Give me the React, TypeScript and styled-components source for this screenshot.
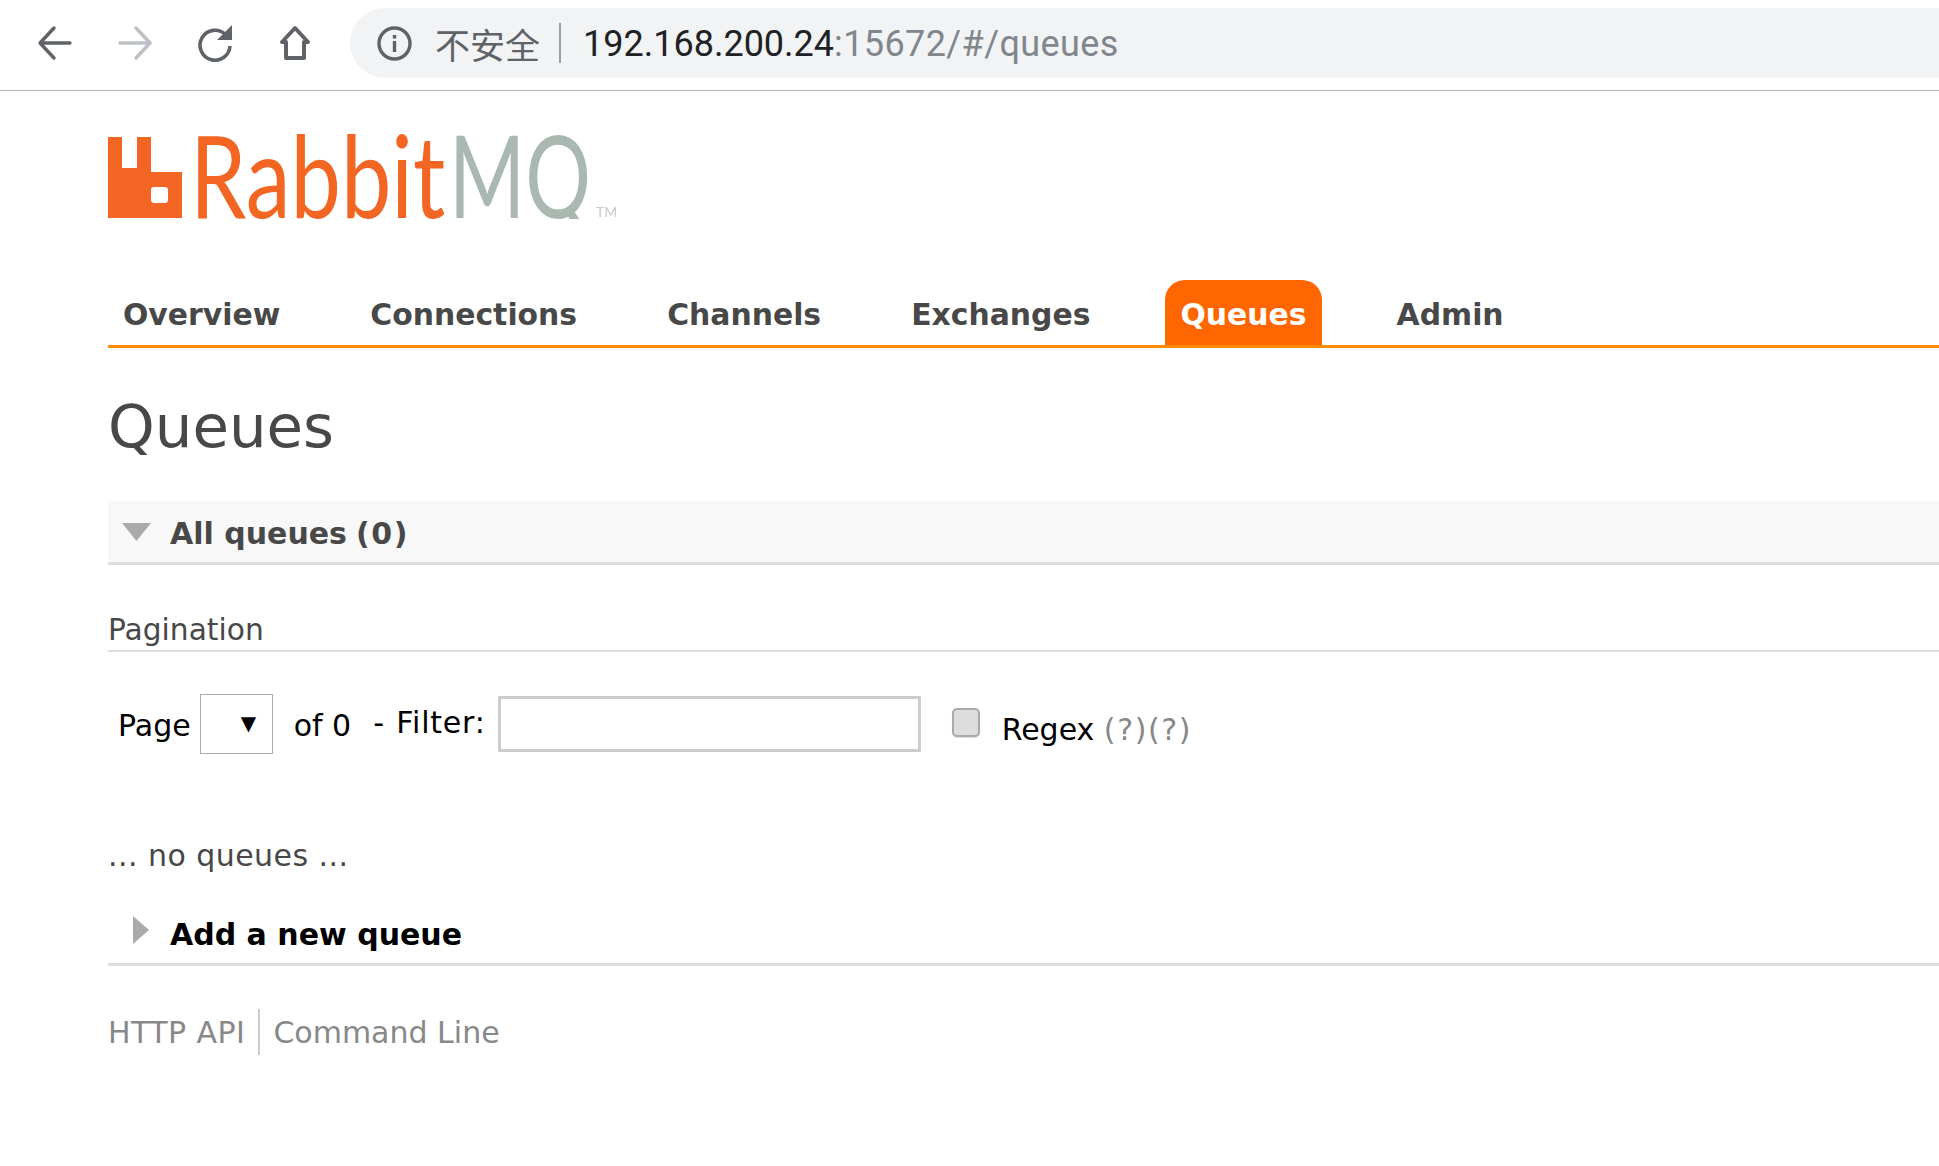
import React from 'react';
import styled, { createGlobalStyle } from 'styled-components';

const GlobalStyle = createGlobalStyle`
  html, body {
    margin: 0;
    padding: 0;
    background: #fff;
    overflow-x: hidden;
  }
  body {
    font-family: "DejaVu Sans", Verdana, sans-serif;
    color: #484848;
  }
`;

const Toolbar = styled.div`
  height: 90px;
  border-bottom: 1px solid #b4b4b4;
  display: flex;
  align-items: flex-start;
  padding-left: 15px;
`;

const NavButton = styled.div`
  width: 80px;
  height: 86px;
  display: flex;
  align-items: center;
  justify-content: center;
  flex: none;
`;

const Omnibox = styled.div`
  flex: 1;
  margin: 8px 0 0 15px;
  height: 70px;
  background: #f1f3f4;
  border-radius: 35px 0 0 35px;
  display: flex;
  align-items: center;
  padding-left: 27px;
`;

const Insecure = styled.span`
  margin-left: 23px;
  font-family: "Noto Sans CJK SC", sans-serif;
  font-size: 35px;
  color: #5f6368;
`;

const OmniDivider = styled.div`
  width: 2px;
  height: 40px;
  margin: 0 22px 0 19px;
  background: #9aa0a6;
`;

const Url = styled.span`
  font-family: Roboto, sans-serif;
  font-size: 36px;
  padding-top: 2px;
  color: #80868b;
  white-space: nowrap;
  letter-spacing: 0.4px;
`;

const UrlHost = styled.span`
  color: #202124;
  letter-spacing: 0;
`;

const Page = styled.div`
  padding-left: 108px;
`;

const LogoRow = styled.div`
  height: 190px;
  padding-top: 3px;
  box-sizing: border-box;
`;

const TabBar = styled.div`
  display: flex;
  gap: 60px;
  height: 65px;
  border-bottom: 3px solid #ff8c00;
  margin-top: -1px;
`;

const Tab = styled.div<{ $active?: boolean }>`
  padding: 0 15px;
  border-radius: 20px 20px 0 0;
  line-height: 70px;
  font-size: 29.85px;
  font-weight: 700;
  white-space: nowrap;
  color: ${p => (p.$active ? '#fff' : '#484848')};
  background: ${p => (p.$active ? '#ff6600' : 'transparent')};
`;

const Title = styled.h1`
  margin: 0;
  padding-top: 44px;
  height: 153px;
  box-sizing: border-box;
  font-size: 59.4px;
  line-height: 70px;
  font-weight: 400;
  color: #484848;
`;

const SectionHeader = styled.div<{ $plain?: boolean }>`
  display: flex;
  align-items: center;
  height: 61px;
  border-bottom: 3px solid #ddd;
  background: ${p => (p.$plain ? 'transparent' : '#f8f8f8')};
  color: ${p => (p.$plain ? '#000' : '#484848')};
  font-size: 30px;
  font-weight: 700;
  white-space: nowrap;
`;

const HeaderLabel = styled.span`
  margin-top: 4px;
`;

const Arrow = styled.div<{ $inset: number }>`
  width: 62px;
  height: 100%;
  box-sizing: border-box;
  padding-left: ${p => p.$inset}px;
  flex: none;
  display: flex;
  align-items: center;
`;

const HeaderCount = styled.span`
  margin-left: 0.3em;
  letter-spacing: 1.6px;
`;

const SubTitle = styled.div`
  margin-top: 43px;
  height: 42px;
  line-height: 44px;
  font-size: 29.7px;
  border-bottom: 2px solid #ddd;
  color: #484848;
`;

const FilterRow = styled.div`
  display: flex;
  align-items: flex-start;
  margin-top: 42px;
  padding-left: 10px;
  height: 60px;
  font-size: 30px;
  color: #000;
`;

const RowText = styled.span<{ $top: number; $left?: number }>`
  margin-top: ${p => p.$top}px;
  margin-left: ${p => p.$left || 0}px;
  line-height: 40px;
  white-space: nowrap;
`;

const FilterLabel = styled(RowText)`
  word-spacing: 1px;
  letter-spacing: 0.8px;
`;

const Hint = styled.span`
  color: #888;
  letter-spacing: 1.6px;
`;

const PageSelect = styled.div`
  margin-left: 9px;
  width: 73px;
  height: 60px;
  flex: none;
  box-sizing: border-box;
  border: 1px solid #aaa;
  padding-left: 40px;
  line-height: 56px;
  font-size: 20px;
  color: #000;
`;

const FilterInput = styled.input`
  margin: 2px 0 0 12px;
  width: 423px;
  height: 56px;
  flex: none;
  box-sizing: border-box;
  border: 3px solid #ccc;
  outline: none;
  background: #fff;
`;

const RegexCheck = styled.input`
  appearance: none;
  margin: 14px 0 0 31px;
  width: 28px;
  height: 29px;
  flex: none;
  box-sizing: border-box;
  border: 2px solid #aaa;
  border-radius: 5px;
  background: #ddd;
  box-shadow: 0 1px 1px #ddd;
`;

const EmptyText = styled.p`
  margin: 78px 0 0;
  height: 46px;
  line-height: 47px;
  font-size: 30px;
  letter-spacing: 0.45px;
  color: #484848;
`;

const AddSection = styled.div`
  margin-top: 24px;
`;

const Footer = styled.div`
  display: flex;
  align-items: center;
  margin-top: 43px;
  height: 46px;
  font-size: 30px;
  color: #888;
`;

const ApiLink = styled.span`
  letter-spacing: 0.45px;
`;

const FooterDivider = styled.div`
  width: 2px;
  height: 46px;
  margin: 0 13px 0 13px;
  background: #ccc;
`;

const LogoGraphic = styled.svg`
  display: block;
  text {
    font-family: Lato, "Open Sans", sans-serif;
    font-weight: 400;
    font-size: 114px;
    filter: blur(0.6px);
  }
`;

const iconStroke = { fill: 'none', strokeWidth: 3.4, strokeLinecap: 'round', strokeLinejoin: 'round' } as const;

const BackIcon = ({ color }: { color: string }) => (
  <svg width="36" height="36" viewBox="0 0 36 36" stroke={color} {...iconStroke}>
    <path d="M33 18H4M17 3 3 18l14 15" />
  </svg>
);

const ForwardIcon = ({ color }: { color: string }) => (
  <svg width="36" height="36" viewBox="0 0 36 36" stroke={color} {...iconStroke}>
    <path d="M3 18h29M19 3l14 15-14 15" />
  </svg>
);

const ReloadIcon = () => (
  <svg width="36" height="38" viewBox="0 0 36 38">
    <path d="M28.5 10.5A15 15 0 1 0 33 22" fill="none" stroke="#5f6368" strokeWidth="3.6" />
    <path d="M35 1v15H20z" fill="#5f6368" />
  </svg>
);

const HomeIcon = () => (
  <svg width="36" height="38" viewBox="0 0 36 38" stroke="#5f6368" fill="none" strokeWidth="4" strokeLinejoin="round">
    <path d="M18 4 5 18h4v16h18V18h4z" />
  </svg>
);

const InfoIcon = () => (
  <svg width="35" height="35" viewBox="0 0 35 35">
    <circle cx="17.5" cy="17.5" r="15.5" fill="none" stroke="#5f6368" strokeWidth="3.4" />
    <rect x="15.8" y="15" width="3.4" height="11" fill="#5f6368" />
    <rect x="15.8" y="9" width="3.4" height="3.6" fill="#5f6368" />
  </svg>
);

const Logo = () => (
  <LogoGraphic width="510" height="170" viewBox="0 0 510 170">
    <defs>
      {/* the logo's Q has almost no tail below the baseline */}
      <clipPath id="mq-baseline">
        <rect x="330" y="-40" width="160" height="125" />
      </clipPath>
    </defs>
    <g transform="translate(0 40)">
      <path
        fill="#f26522"
        fillRule="evenodd"
        d="M0 3h14v31h15V3h14v35h31v46H0zM46 53a3 3 0 0 0-3 3v10a3 3 0 0 0 3 3h11a3 3 0 0 0 3-3V56a3 3 0 0 0-3-3z"
      />
      <text transform="translate(82 84) scale(0.79 1)" fill="#f26522">Rabbit</text>
      <g clipPath="url(#mq-baseline)">
        <text transform="translate(341 84) scale(0.72 1)" fill="#a9b8b0">MQ</text>
      </g>
      <text x="488" y="83" fill="#c4cdc8" style={{ fontSize: 14 }}>TM</text>
    </g>
  </LogoGraphic>
);

const tabs = ['Overview', 'Connections', 'Channels', 'Exchanges', 'Queues', 'Admin'];

const App: React.FC = () => {
  return (
    <>
      <GlobalStyle />
      <Toolbar>
        <NavButton><BackIcon color="#5f6368" /></NavButton>
        <NavButton><ForwardIcon color="#bdc1c6" /></NavButton>
        <NavButton><ReloadIcon /></NavButton>
        <NavButton><HomeIcon /></NavButton>
        <Omnibox>
          <InfoIcon />
          <Insecure>不安全</Insecure>
          <OmniDivider />
          <Url>
            <UrlHost>192.168.200.24</UrlHost>:15672/#/queues
          </Url>
        </Omnibox>
      </Toolbar>
      <Page>
        <LogoRow>
          <Logo />
        </LogoRow>
        <TabBar>
          {tabs.map(tab => (
            <Tab key={tab} $active={tab === 'Queues'}>{tab}</Tab>
          ))}
        </TabBar>
        <Title>Queues</Title>
        <SectionHeader>
          <Arrow $inset={14}>
            <svg width="29" height="18" viewBox="0 0 29 18">
              <path d="M0 0h29L14.5 18z" fill="#aaa" />
            </svg>
          </Arrow>
          <HeaderLabel>
            All queues<HeaderCount>(0)</HeaderCount>
          </HeaderLabel>
        </SectionHeader>
        <SubTitle>Pagination</SubTitle>
        <FilterRow>
          <RowText $top={12}>Page</RowText>
          <PageSelect>▼</PageSelect>
          <RowText $top={12} $left={21}>of 0</RowText>
          <FilterLabel $top={9} $left={22}>- Filter:</FilterLabel>
          <FilterInput type="text" />
          <RegexCheck type="checkbox" />
          <RowText $top={16} $left={22}>
            Regex <Hint>(?)(?)</Hint>
          </RowText>
        </FilterRow>
        <EmptyText>... no queues ...</EmptyText>
        <AddSection>
          <SectionHeader $plain>
            <Arrow $inset={25}>
              <svg width="16" height="28" viewBox="0 0 16 28" style={{ marginBottom: 6 }}>
                <path d="M0 0l16 14L0 28z" fill="#aaa" />
              </svg>
            </Arrow>
            <HeaderLabel>Add a new queue</HeaderLabel>
          </SectionHeader>
        </AddSection>
        <Footer>
          <ApiLink>HTTP API</ApiLink>
          <FooterDivider />
          Command Line
        </Footer>
      </Page>
    </>
  );
};

export default App;
